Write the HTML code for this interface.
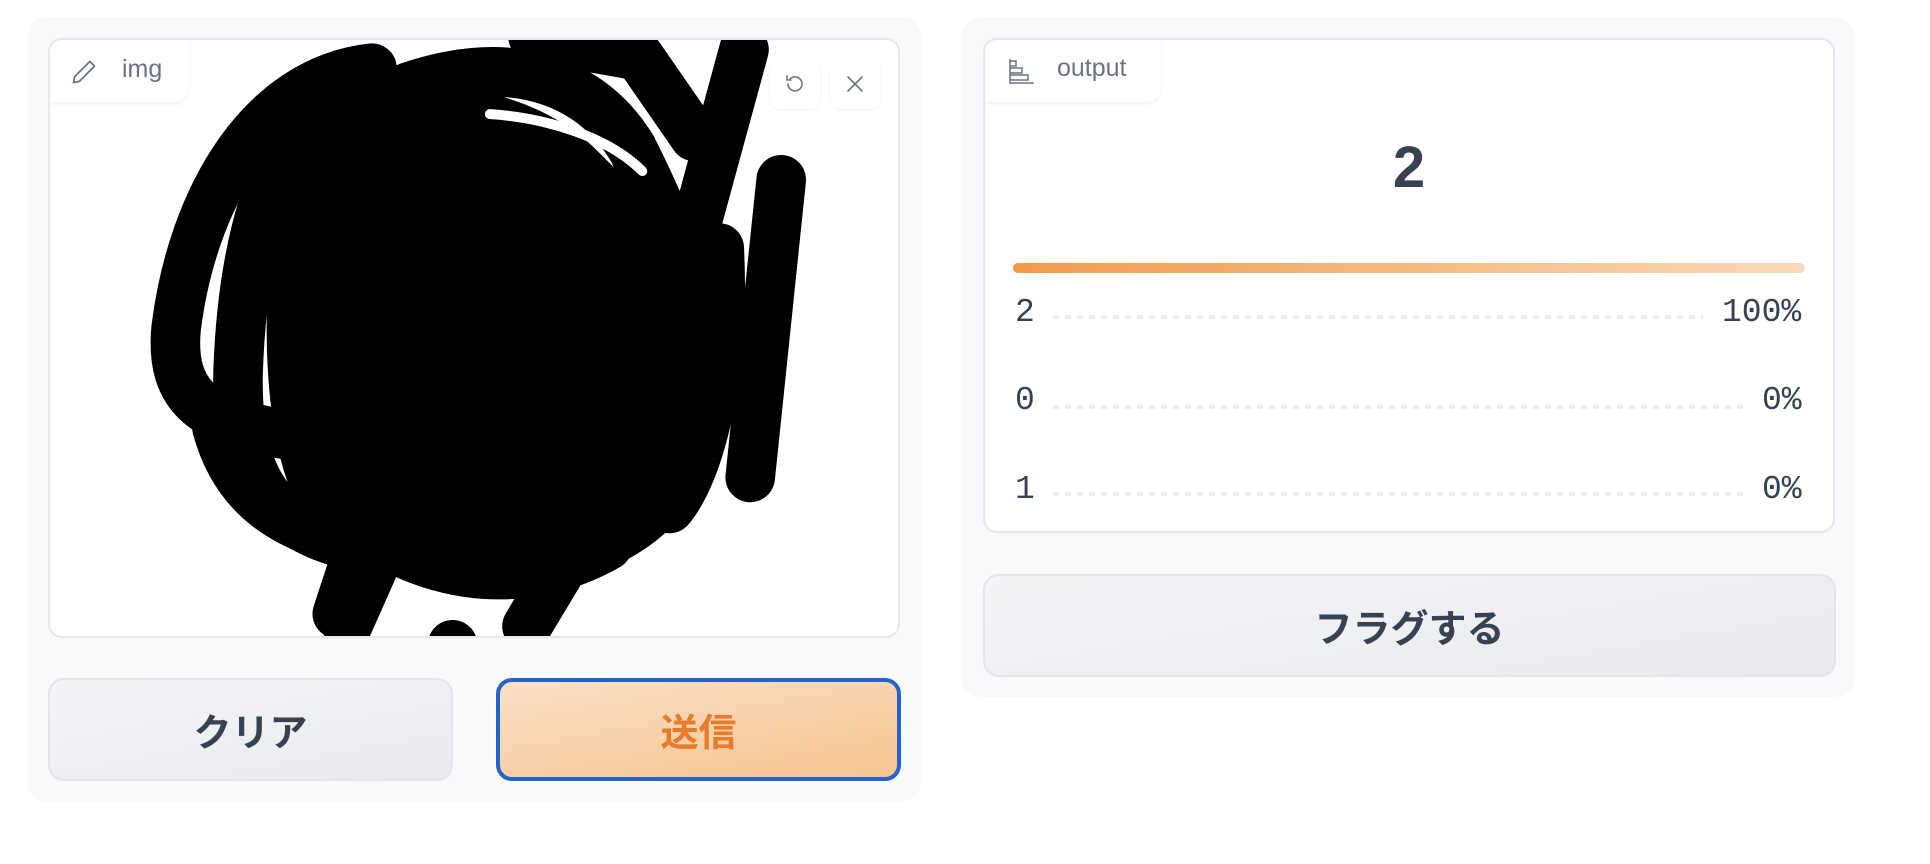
<!DOCTYPE html>
<html><head><meta charset="utf-8"><style>
*{box-sizing:border-box;margin:0;padding:0}
body{width:1930px;height:864px;background:#fff;position:relative;overflow:hidden;font-family:"Liberation Sans","Noto Sans CJK JP",sans-serif}
.abs{position:absolute}
.panel{background:#f8f9fb;border-radius:20px}
.box{background:#fff;border:2px solid #e5e7eb;border-radius:14px;overflow:hidden}
.tab{background:#fff;border-bottom-right-radius:14px;box-shadow:0 2px 4px rgba(0,0,0,.06);color:#6b7280;font-size:25px;display:flex;align-items:center}
.btn{border-radius:16px;display:flex;align-items:center;justify-content:center;font-weight:bold;font-size:38px;font-family:"Noto Sans CJK JP","Liberation Sans",sans-serif}
.gray{background:linear-gradient(170deg,#f4f5f7,#e9eaee);border:2px solid #e3e5e9;color:#374151}
.mono{font-family:"Liberation Mono","DejaVu Sans Mono",monospace;font-size:33px;color:#374151;line-height:1}
.dots{height:4px;background:repeating-linear-gradient(90deg,#eceef1 0 6px,transparent 6px 12px)}
.ib{width:50px;height:50px;background:#fff;border-radius:10px;box-shadow:0 1px 3px rgba(0,0,0,.06);display:flex;align-items:center;justify-content:center}
</style></head><body>
<div class="abs panel" style="left:27px;top:17px;width:894px;height:785px"></div>
<div class="abs box" style="left:48px;top:38px;width:852px;height:600px">
<svg class="abs" style="left:-2px;top:-2px" width="852" height="600" viewBox="0 0 852 600">
<g transform="translate(-48,-38) scale(1.24)" fill="none" stroke="#000" stroke-width="40" stroke-linecap="round" stroke-linejoin="round">
<path d="M230,100 C290,50 420,60 480,120 C540,180 590,220 585,330 C580,400 530,450 470,465 C400,485 300,475 255,430 C210,380 205,250 230,100 Z" fill="#000" stroke="none"/>
<path d="M300,55 C210,65 155,160 142,265 C137,320 165,340 228,350"/>
<path d="M275,65 C215,110 195,210 192,300 C190,380 215,425 285,440"/>
<path d="M330,70 C420,40 480,70 510,120 C540,180 560,230 560,300"/>
<path d="M430,30 L515,45 L560,110"/>
<path d="M600,40 L540,260"/>
<path d="M630,145 L605,385"/>
<path d="M580,200 C585,300 565,380 540,410"/>
<path d="M290,440 L272,495"/>
<path d="M300,460 L280,505"/>
<path d="M470,430 L425,505"/>
<path d="M175,345 C190,400 230,430 300,440"/>
<path d="M260,400 C330,470 420,480 490,440"/>
<circle cx="365" cy="520" r="20" fill="#000" stroke="none"/>
<path d="M395,92 C440,95 490,110 518,138" stroke="#fff" stroke-width="8"/>
</g></svg>
<div class="abs tab" style="left:0;top:0;width:139px;height:62px">
<svg class="abs" style="left:20px;top:18px" width="28" height="28" viewBox="0 0 24 24" fill="none" stroke="#6b7280" stroke-width="1.5" stroke-linejoin="round"><path d="M17 3l4 4L8 20l-5 1 1-5z"/></svg>
<span class="abs" style="left:72px;top:15px">img</span></div>
<div class="abs ib" style="left:720px;top:19px"><svg width="24" height="24" viewBox="0 0 24 24" fill="none" stroke="#6b7280" stroke-width="1.6" stroke-linecap="round"><path d="M5 12a7 7 0 1 0 2-5"/><path d="M4 4v4h4"/></svg></div>
<div class="abs ib" style="left:780px;top:19px"><svg width="24" height="24" viewBox="0 0 24 24" fill="none" stroke="#6b7280" stroke-width="1.6" stroke-linecap="round"><path d="M5 5l14 14M19 5L5 19"/></svg></div>
</div>
<div class="abs btn gray" style="left:48px;top:678px;width:405px;height:103px">クリア</div>
<div class="abs btn" style="left:496px;top:678px;width:405px;height:103px;background:linear-gradient(170deg,#fae0c6,#f6c491);border:4px solid #2563cc;color:#e87b2c">送信</div>

<div class="abs panel" style="left:961px;top:17px;width:894px;height:680px"></div>
<div class="abs box" style="left:983px;top:38px;width:852px;height:495px">
<div class="abs tab" style="left:0;top:0;width:176px;height:62px">
<svg class="abs" style="left:22px;top:17px" width="28" height="28" viewBox="0 0 28 28" fill="none" stroke="#6b7280" stroke-width="1.5"><path d="M3 2v24h24M3 4h6v5H3M3 11h12v5H3M3 18h18v5H3"/></svg>
<span class="abs" style="left:72px;top:14px">output</span></div>
<div class="abs" style="left:0;width:848px;top:96px;text-align:center;font-size:58px;font-weight:bold;color:#374151;line-height:64px">2</div>
<div class="abs" style="left:28px;top:223px;width:792px;height:10px;border-radius:5px;background:linear-gradient(90deg,#f29a4a,#f9dab9)"></div>
<div class="abs mono" style="left:30px;top:256px">2</div>
<div class="abs dots" style="left:68px;top:275px;width:650px"></div>
<div class="abs mono" style="left:737px;top:256px">100%</div>
<div class="abs mono" style="left:30px;top:344px">0</div>
<div class="abs dots" style="left:68px;top:365px;width:690px"></div>
<div class="abs mono" style="left:777px;top:344px">0%</div>
<div class="abs mono" style="left:30px;top:433px">1</div>
<div class="abs dots" style="left:68px;top:452px;width:690px"></div>
<div class="abs mono" style="left:777px;top:433px">0%</div>
</div>
<div class="abs btn gray" style="left:983px;top:574px;width:853px;height:103px">フラグする</div>
</body></html>
